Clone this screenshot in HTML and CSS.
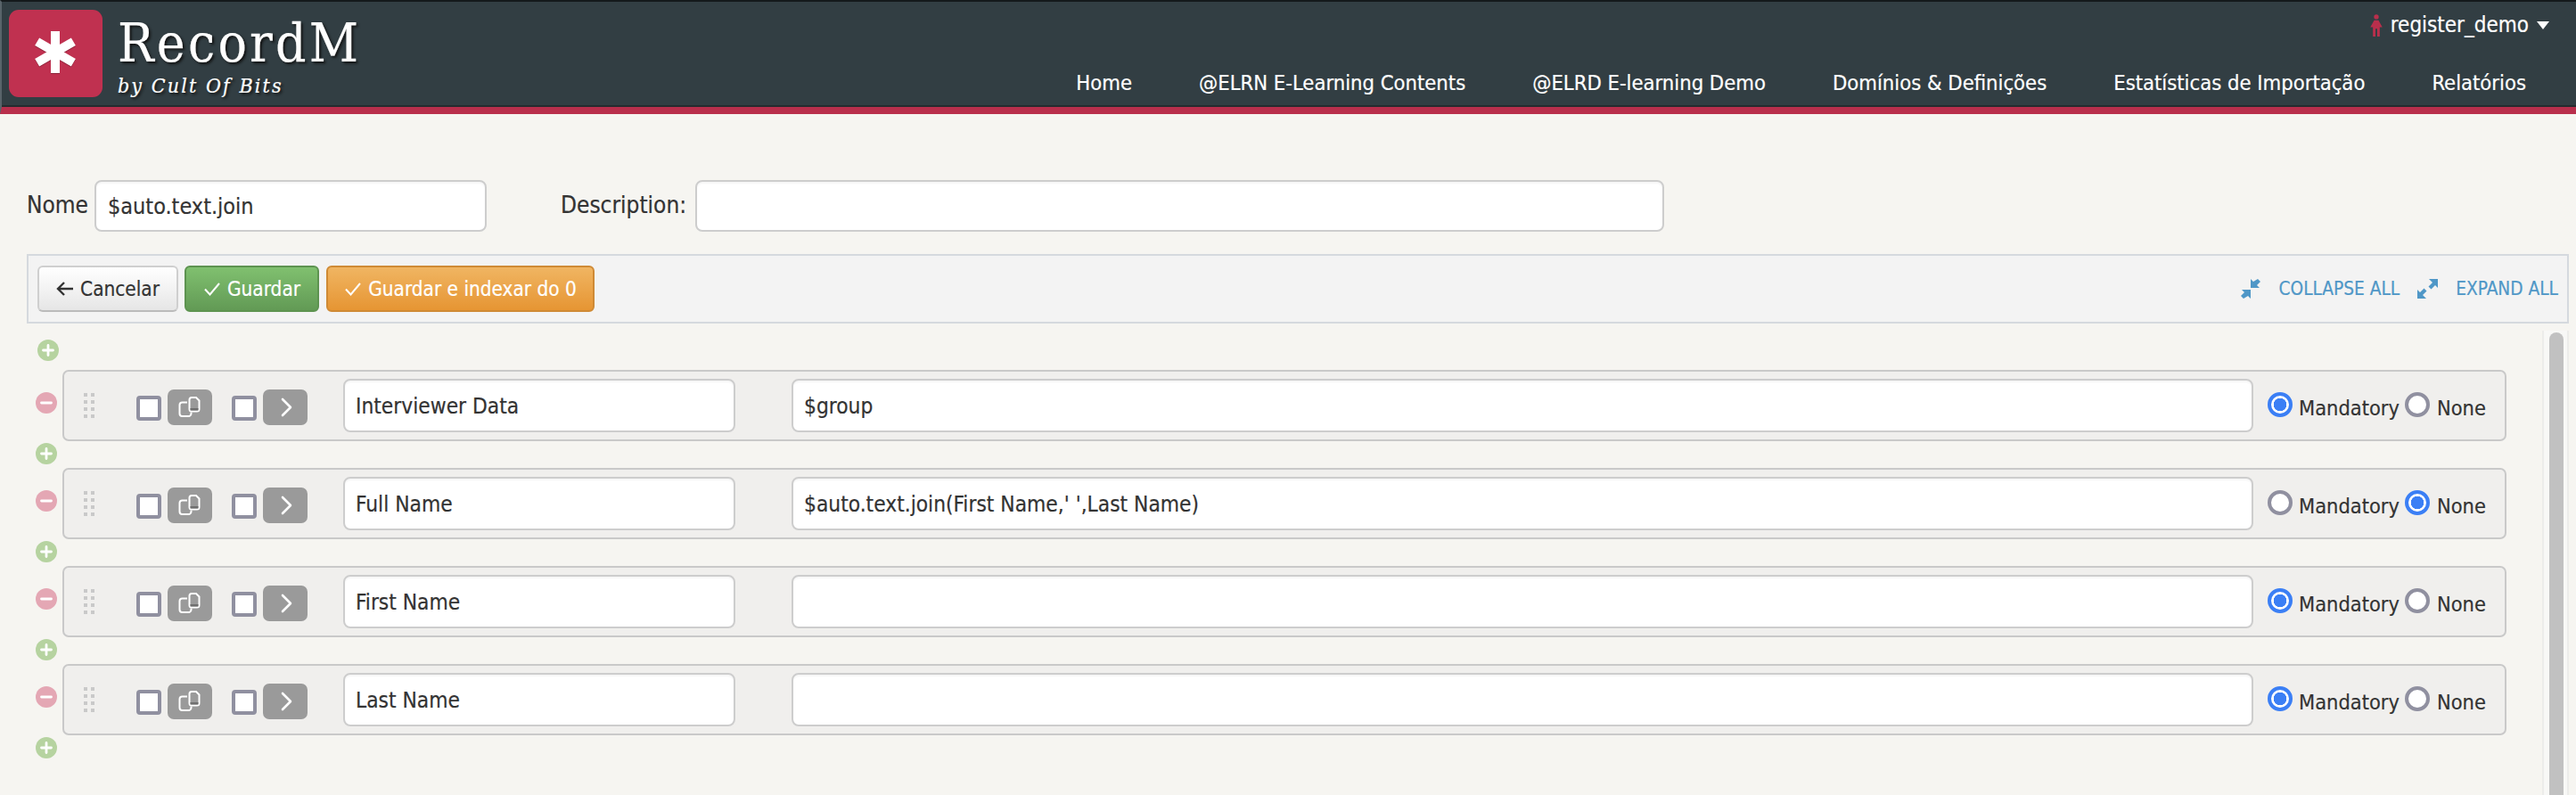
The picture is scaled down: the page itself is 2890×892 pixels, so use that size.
FILE: index.html
```html
<!DOCTYPE html>
<html lang="pt">
<head>
<meta charset="utf-8">
<title>RecordM</title>
<link rel="stylesheet" href="styles.css">
</head>
<body>
<svg class="defs" width="0" height="0" aria-hidden="true">
  <symbol id="copy" viewBox="0 0 50 40">
    <path d="M22 14.500h-5.500a3 3 0 0 0-3 3V27a3 3 0 0 0 3 3h7a3 3 0 0 0 3-3v-1.500" fill="none" stroke="#fff" stroke-width="2"/>
    <path d="M27 9h5l3.500 3.500V22a2.500 2.500 0 0 1-2.500 2.500h-6a2.500 2.500 0 0 1-2.500-2.500V11.500A2.500 2.500 0 0 1 27 9z" fill="none" stroke="#fff" stroke-width="2"/>
    <path d="M25.500 21h9v2.500h-9z" fill="#6f6f6f"/>
  </symbol>
  <symbol id="chev" viewBox="0 0 50 40">
    <path d="M22 11l9 9-9 9" fill="none" stroke="#fff" stroke-width="2.600" stroke-linecap="round" stroke-linejoin="round"/>
  </symbol>
  <symbol id="check" viewBox="0 0 20 20">
    <path d="M2 10.500l5.500 6L18 4" fill="none" stroke="#fff" stroke-width="2"/>
  </symbol>
  <symbol id="plus" viewBox="0 0 24 24">
    <path d="M6.500 12h11M12 6.500v11" stroke="#fff" stroke-width="2.800" stroke-linecap="round"/>
  </symbol>
  <symbol id="minus" viewBox="0 0 24 24">
    <path d="M6.500 12h11" stroke="#fff" stroke-width="2.800" stroke-linecap="round"/>
  </symbol>
</svg>

<header class="topbar">
  <div class="logo">
    <svg class="logo-star" viewBox="0 0 105 98" width="105" height="98" aria-hidden="true">
      <g fill="#fff">
        <rect x="47" y="24" width="10" height="47"/>
        <rect x="47" y="24" width="10" height="47" transform="rotate(60 52 47.500)"/>
        <rect x="47" y="24" width="10" height="47" transform="rotate(120 52 47.500)"/>
      </g>
    </svg>
  </div>
  <div class="brand">
    <div class="brand-name">RecordM</div>
    <div class="brand-sub">by Cult Of Bits</div>
  </div>
  <div class="topnav">
    <div class="user">
      <svg class="user-icon" viewBox="0 0 14 26" width="14" height="25" aria-hidden="true">
        <circle cx="7" cy="3" r="2.800" fill="#b92f4c"/>
        <path d="M4.500 7h5L14 15l-3 0v11H8V17H6v9H3V15l-3 0z" fill="#b92f4c"/>
      </svg>
      <span>register_demo</span>
      <span class="caret"></span>
    </div>
    <nav class="menu">
      <a>Home</a>
      <a>@ELRN E-Learning Contents</a>
      <a>@ELRD E-learning Demo</a>
      <a>Domínios &amp; Definições</a>
      <a>Estatísticas de Importação</a>
      <a>Relatórios</a>
    </nav>
  </div>
</header>

<main class="page">
  <div class="meta">
    <label class="meta-label">Nome</label>
    <input class="field field-name" type="text" value="$auto.text.join">
    <label class="meta-label meta-desc">Description:</label>
    <input class="field field-desc" type="text" value="">
  </div>

  <div class="toolbar">
    <button class="btn btn-cancel">
      <svg width="20" height="18" viewBox="0 0 20 18" aria-hidden="true"><path d="M9 2L2 9l7 7M2 9h17" fill="none" stroke="#333" stroke-width="2.400"/></svg>
      Cancelar
    </button>
    <button class="btn btn-save"><svg width="20" height="20" aria-hidden="true"><use href="#check"/></svg> Guardar</button>
    <button class="btn btn-index"><svg width="20" height="20" aria-hidden="true"><use href="#check"/></svg> Guardar e indexar do 0</button>
    <div class="toolbar-links">
      <a class="tlink">
        <svg width="22" height="22" viewBox="0 0 22 22" aria-hidden="true"><g fill="#4f97c7"><path d="M19 0l3 3-4 4 3 3H11V0l3 3z"/><path d="M3 22l-3-3 4-4-3-3h10v10l-3-3z"/></g></svg>
        <span>COLLAPSE ALL</span>
      </a>
      <a class="tlink tlink-expand">
        <svg width="23" height="22" viewBox="0 0 23 22" aria-hidden="true"><g fill="#4f97c7"><path d="M13 0h10v10l-3-3-4.500 4.500-3-3L17 4z"/><path d="M10 22H0V12l3 3 4.500-4.500 3 3L6 18z"/></g></svg>
        <span>EXPAND ALL</span>
      </a>
    </div>
  </div>

  <div class="workspace">
    <div class="tree">
      <button class="round add add-first"><svg width="24" height="24" aria-hidden="true"><use href="#plus"/></svg></button>

      <div class="line">
        <button class="round del"><svg width="24" height="24" aria-hidden="true"><use href="#minus"/></svg></button>
        <div class="row">
          <div class="grip"><i></i><i></i><i></i><i></i><i></i><i></i><i></i><i></i></div>
          <input class="chk chk-a" type="checkbox">
          <button class="sq"><svg width="50" height="40" aria-hidden="true"><use href="#copy"/></svg></button>
          <input class="chk chk-b" type="checkbox">
          <button class="sq"><svg width="50" height="40" aria-hidden="true"><use href="#chev"/></svg></button>
          <input class="field cell-name" type="text" value="Interviewer Data">
          <input class="field cell-expr" type="text" value="$group">
          <input class="rad rad-a" type="radio" name="r1" checked>
          <span class="rad-text rad-text-a">Mandatory</span>
          <input class="rad rad-b" type="radio" name="r1">
          <span class="rad-text rad-text-b">None</span>
        </div>
      </div>
      <button class="round add"><svg width="24" height="24" aria-hidden="true"><use href="#plus"/></svg></button>

      <div class="line">
        <button class="round del"><svg width="24" height="24" aria-hidden="true"><use href="#minus"/></svg></button>
        <div class="row">
          <div class="grip"><i></i><i></i><i></i><i></i><i></i><i></i><i></i><i></i></div>
          <input class="chk chk-a" type="checkbox">
          <button class="sq"><svg width="50" height="40" aria-hidden="true"><use href="#copy"/></svg></button>
          <input class="chk chk-b" type="checkbox">
          <button class="sq"><svg width="50" height="40" aria-hidden="true"><use href="#chev"/></svg></button>
          <input class="field cell-name" type="text" value="Full Name">
          <input class="field cell-expr" type="text" value="$auto.text.join(First Name,' ',Last Name)">
          <input class="rad rad-a" type="radio" name="r2">
          <span class="rad-text rad-text-a">Mandatory</span>
          <input class="rad rad-b" type="radio" name="r2" checked>
          <span class="rad-text rad-text-b">None</span>
        </div>
      </div>
      <button class="round add"><svg width="24" height="24" aria-hidden="true"><use href="#plus"/></svg></button>

      <div class="line">
        <button class="round del"><svg width="24" height="24" aria-hidden="true"><use href="#minus"/></svg></button>
        <div class="row">
          <div class="grip"><i></i><i></i><i></i><i></i><i></i><i></i><i></i><i></i></div>
          <input class="chk chk-a" type="checkbox">
          <button class="sq"><svg width="50" height="40" aria-hidden="true"><use href="#copy"/></svg></button>
          <input class="chk chk-b" type="checkbox">
          <button class="sq"><svg width="50" height="40" aria-hidden="true"><use href="#chev"/></svg></button>
          <input class="field cell-name" type="text" value="First Name">
          <input class="field cell-expr" type="text" value="">
          <input class="rad rad-a" type="radio" name="r3" checked>
          <span class="rad-text rad-text-a">Mandatory</span>
          <input class="rad rad-b" type="radio" name="r3">
          <span class="rad-text rad-text-b">None</span>
        </div>
      </div>
      <button class="round add"><svg width="24" height="24" aria-hidden="true"><use href="#plus"/></svg></button>

      <div class="line">
        <button class="round del"><svg width="24" height="24" aria-hidden="true"><use href="#minus"/></svg></button>
        <div class="row">
          <div class="grip"><i></i><i></i><i></i><i></i><i></i><i></i><i></i><i></i></div>
          <input class="chk chk-a" type="checkbox">
          <button class="sq"><svg width="50" height="40" aria-hidden="true"><use href="#copy"/></svg></button>
          <input class="chk chk-b" type="checkbox">
          <button class="sq"><svg width="50" height="40" aria-hidden="true"><use href="#chev"/></svg></button>
          <input class="field cell-name" type="text" value="Last Name">
          <input class="field cell-expr" type="text" value="">
          <input class="rad rad-a" type="radio" name="r4" checked>
          <span class="rad-text rad-text-a">Mandatory</span>
          <input class="rad rad-b" type="radio" name="r4">
          <span class="rad-text rad-text-b">None</span>
        </div>
      </div>
      <button class="round add"><svg width="24" height="24" aria-hidden="true"><use href="#plus"/></svg></button>
    </div>
    <div class="scrolltrack"><div class="scrollthumb"></div></div>
  </div>
</main>
</body>
</html>
```
FILE: styles.css
```css
* { box-sizing: border-box; }
html, body { height: 100%; }
body {
  margin: 0;
  height: 892px;
  overflow: hidden;
  display: flex;
  flex-direction: column;
  background: #f6f5f1;
  color: #333;
  font-family: "DejaVu Sans Condensed", "DejaVu Sans", sans-serif;
  font-stretch: condensed;
  font-size: 23.4px;
  -webkit-text-stroke: 0.2px;
}
.defs { display: block; height: 0; }

/* top bar */
.topbar {
  flex: none;
  height: 128px;
  display: flex;
  background: #323e43;
  border-top: 2px solid #14191b;
  border-left: 2px solid #59646a;
  border-bottom: 8px solid #b92f4c;
  box-shadow: inset 0 -2px 0 #262b2e;
}
.logo {
  flex: none;
  width: 105px;
  height: 98px;
  margin: 9px 0 0 8px;
  background: #c03150;
  border-radius: 11px;
}
.logo-star { display: block; filter: drop-shadow(0 1px 0 #8d2239); }
.brand { flex: none; margin-left: 17px; color: #fff; text-shadow: 2px 2px 3px #111; }
.brand-name {
  font-family: "DejaVu Serif Condensed", "DejaVu Serif", serif;
  font-stretch: condensed;
  font-size: 60px;
  line-height: 62px;
  margin-top: 15px;
  letter-spacing: 3.2px;
}
.brand-sub {
  font-family: "DejaVu Serif Condensed", "DejaVu Serif", serif;
  font-stretch: condensed;
  font-style: italic;
  font-size: 23px;
  line-height: 30px;
  margin-top: 2px;
  letter-spacing: 2.1px;
}
.topnav {
  flex: 1;
  display: flex;
  flex-direction: column;
  align-items: flex-end;
  padding-right: 30px;
  color: #fff;
  font-size: 23.6px;
}
.user {
  display: flex;
  align-items: center;
  height: 26px;
  margin-top: 13px;
  font-size: 24px;
}
.user-icon { margin-right: 9px; }
.caret {
  width: 0;
  height: 0;
  margin-left: 9px;
  border: 7px solid transparent;
  border-top: 9px solid #fff;
  border-bottom: 0;
}
.menu {
  display: flex;
  gap: 75px;
  margin-top: 37px;
  padding-right: 26px;
  line-height: 30px;
}

/* page */
.page {
  flex: 1;
  min-height: 0;
  display: flex;
  flex-direction: column;
  padding: 74px 8px 0 30px;
}
.meta { flex: none; display: flex; align-items: center; height: 58px; }
.meta-label { margin-top: -2px; font-size: 26px; }
.meta-desc { margin-left: 83px; }
.field {
  height: 60px;
  padding: 0 12px;
  border: 2px solid #cdcdcd;
  border-radius: 8px;
  background: #fff;
  font: inherit;
  font-size: 24.3px;
  color: #333;
  outline: none;
  box-shadow: inset 0 2px 2px rgba(0, 0, 0, 0.04);
}
.field-name { width: 440px; height: 58px; margin-left: 7px; padding-left: 13px; font-size: 25px; }
.field-desc { width: 1087px; height: 58px; margin-left: 10px; }

/* toolbar */
.toolbar {
  flex: none;
  display: flex;
  align-items: center;
  height: 78px;
  margin-top: 25px;
  padding-left: 10px;
  background: #f3f3f3;
  border: 2px solid #d5d9de;
}
.btn {
  display: flex;
  align-items: center;
  justify-content: center;
  gap: 7px;
  height: 52px;
  border-radius: 6px;
  font: inherit;
  font-size: 22.4px;
  padding: 0;
}
.btn-cancel {
  width: 158px;
  color: #333;
  background: linear-gradient(#fff, #e6e6e6);
  border: 2px solid #cfcfcf;
  border-bottom-color: #bbb;
}
.btn-save {
  width: 151px;
  margin-left: 7px;
  color: #fff;
  background: linear-gradient(#80c06f, #629a55);
  border: 2px solid #5d9350;
}
.btn-index {
  width: 301px;
  margin-left: 8px;
  color: #fff;
  background: linear-gradient(#f0b562, #e69533);
  border: 2px solid #cf8a35;
}
.toolbar-links { margin-left: auto; display: flex; padding-right: 10px; }
.tlink {
  display: flex;
  align-items: center;
  gap: 20px;
  color: #4f97c7;
  font-size: 20.7px;
}
.tlink-expand { margin-left: 20px; }

/* tree */
.workspace { flex: 1; min-height: 0; display: flex; }
.tree { flex: none; width: 2782px; }
.round {
  display: block;
  width: 24px;
  height: 24px;
  padding: 0;
  border: 0;
  border-radius: 50%;
}
.round svg { display: block; }
.add { background: #b6d3a0; margin: 2px 0 4px 10px; }
.add-first { margin: 18px 0 10px 12px; }
.del { flex: none; background: #e4a7b4; margin: 25px 0 0 10px; }
.line { display: flex; }
.row {
  flex: none;
  width: 2742px;
  height: 80px;
  margin-left: 6px;
  display: flex;
  align-items: center;
  background: #f0efed;
  border: 2px solid #c9c9c9;
  border-radius: 7px;
  padding-left: 22px;
}
.grip {
  flex: none;
  display: grid;
  grid-template-columns: 4px 4px;
  grid-auto-rows: 4px;
  gap: 4px;
}
.grip i { background: #c9c9c9; }
.chk, .rad {
  appearance: none;
  flex: none;
  margin: 0;
  background: #fff;
}
.chk {
  width: 28px;
  height: 28px;
  border: 4px solid #9090a0;
  border-radius: 4px;
  margin-top: 6px;
}
.chk-a { margin-left: 47px; }
.chk-b { margin-left: 22px; }
.sq {
  flex: none;
  width: 50px;
  height: 40px;
  margin: 4px 0 0 7px;
  padding: 0;
  border: 0;
  border-radius: 7px;
  background: #9a9a9a;
}
.sq svg { display: block; }
.cell-name { flex: none; width: 440px; margin-left: 40px; }
.cell-expr { flex: none; width: 1640px; margin-left: 63px; }
.rad {
  width: 28px;
  height: 28px;
  border-radius: 50%;
  border: 4px solid #9090a0;
  margin-top: -2px;
}
.rad:checked {
  border-color: #3b7ff5;
  box-shadow: none;
  background: radial-gradient(circle, #3b7ff5 0 7px, #fff 7.500px);
}
.rad-a { margin-left: 16px; }
.rad-b { margin-left: 7px; }
.rad-text { flex: none; margin-top: 5px; }
.rad-text-a { width: 112px; margin-left: 7px; }
.rad-text-b { margin-left: 8px; }

/* scrollbar */
.scrolltrack {
  flex: none;
  width: 30px;
  margin: 8px 0 0 40px;
  padding: 2px 6px 0;
  background: #f8f8f6;
  border-left: 2px solid #ececea;
  border-right: 2px solid #ececea;
}
.scrollthumb {
  width: 16px;
  height: 100%;
  background: #c1c1c1;
  border-radius: 8px 8px 0 0;
}
```
